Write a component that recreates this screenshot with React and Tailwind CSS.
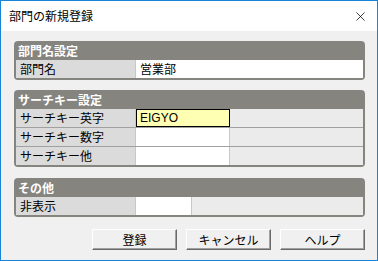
import { X } from "lucide-react";

const font = { fontFamily: '"Noto Sans CJK JP", "Noto Sans", sans-serif' };

function Group({ title, children }) {
	return (
		<div className="rounded-[4px] bg-[#85847f] px-[2px] pb-[2px]">
			<div className="h-[19px] flex items-center pl-[2px] text-[12px] font-bold text-white leading-none">
				{title}
			</div>
			<div className="flex flex-col gap-[1px] bg-[#a0a0a0]">{children}</div>
		</div>
	);
}

function Row({ label, value, valueWidth = "w-[94px]", active, fill }) {
	return (
		<div className="flex h-[18px] text-[12px] leading-none text-black">
			<div className="w-[120px] bg-[#dcdbdb] flex items-center pl-[4px] border-r border-[#c8c8c8]">
				{label}
			</div>
			{fill ? (
				<div className="flex-1 bg-white flex items-center pl-[4px]">{value}</div>
			) : (
				<>
					<div
						className={
							active
								? `${valueWidth} bg-[#ffffb4] border border-black flex items-center pl-[3px]`
								: `${valueWidth} bg-white border-r border-[#c8c8c8]`
						}
						style={{ fontFamily: '"Liberation Sans", sans-serif' }}
					>
						{value}
					</div>
					<div className="flex-1 bg-[#ebebeb]" />
				</>
			)}
		</div>
	);
}

function Btn({ children }) {
	return (
		<button className="w-[85px] h-[21px] bg-[#f0f0f0] border border-t-white border-l-white border-r-[#696969] border-b-[#696969] shadow-[inset_-1px_-1px_0_#a0a0a0] text-[12px] leading-none text-black">
			{children}
		</button>
	);
}

export default function App() {
	return (
		<div
			className="w-[378px] h-[261px] border border-[#1883d7] bg-white flex flex-col overflow-hidden"
			style={font}
		>
			<div className="h-[30px] flex items-center justify-between pl-[8px] pr-[9px] text-[12px] text-black">
				<span>部門の新規登録</span>
				<X className="w-[15px] h-[15px]" strokeWidth={1.2} />
			</div>
			<div className="flex-1 bg-[#f0f0f0] pt-[10px] pl-[13px] pr-[12px] flex flex-col">
				<Group title="部門名設定">
					<Row label="部門名" value="営業部" fill />
				</Group>
				<div className="mt-[10px]">
					<Group title="サーチキー設定">
						<Row label="サーチキー英字" value="EIGYO" active />
						<Row label="サーチキー数字" />
						<Row label="サーチキー他" />
					</Group>
				</div>
				<div className="mt-[11px]">
					<Group title="その他">
						<Row label="非表示" valueWidth="w-[56px]" />
					</Group>
				</div>
				<div className="mt-[12px] flex justify-end gap-[9px]">
					<Btn>登録</Btn>
					<Btn>キャンセル</Btn>
					<Btn>ヘルプ</Btn>
				</div>
			</div>
		</div>
	);
}
